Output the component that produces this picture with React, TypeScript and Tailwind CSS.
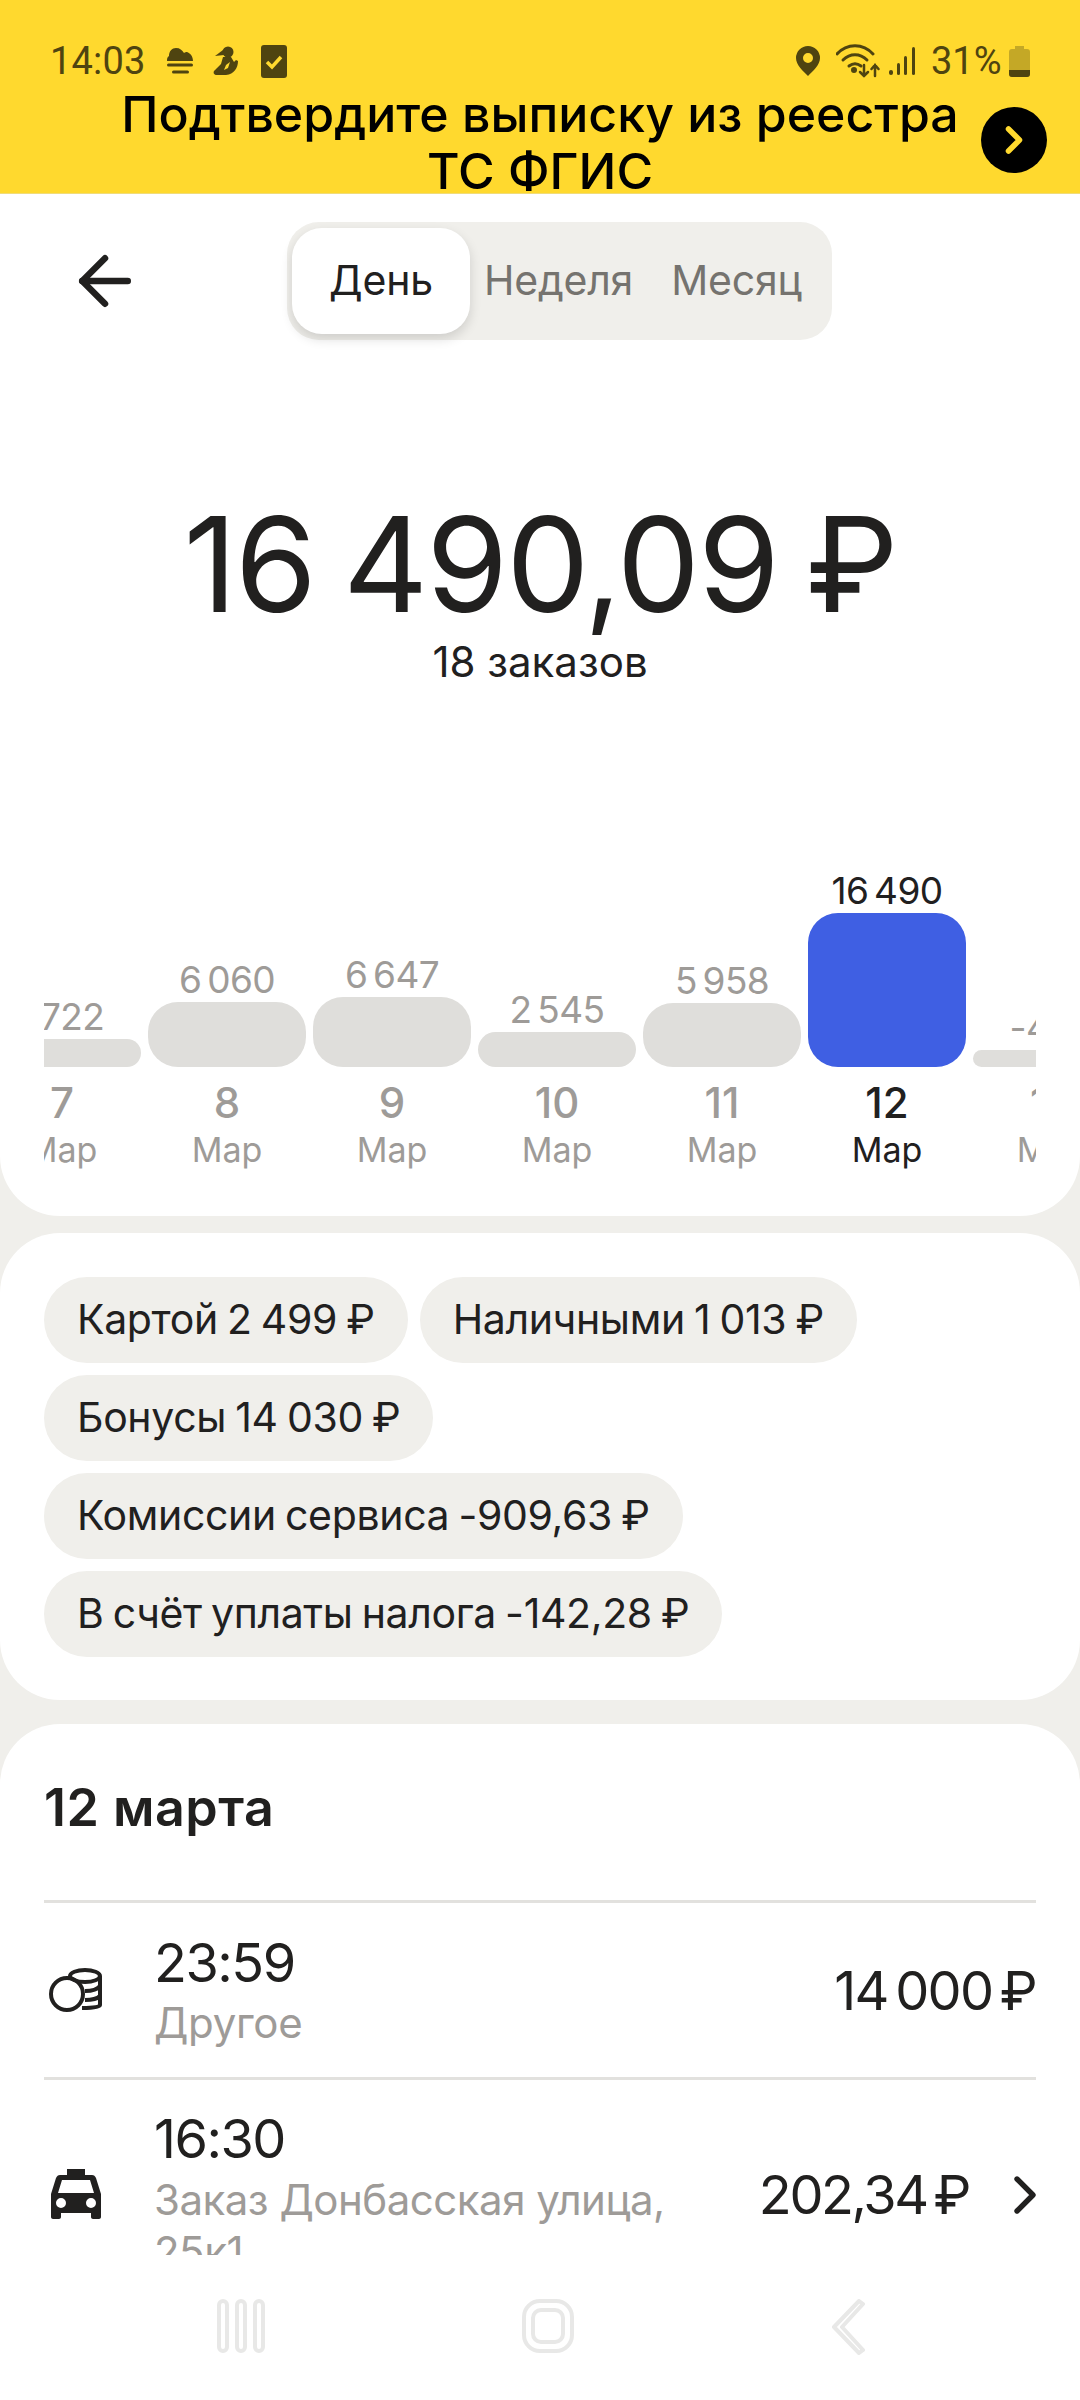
import { ArrowLeft, ChevronRight } from "lucide-react";

const days = [
  { value: "1 722", day: "7", height: 28 },
  { value: "6 060", day: "8", height: 65 },
  { value: "6 647", day: "9", height: 70 },
  { value: "2 545", day: "10", height: 35 },
  { value: "5 958", day: "11", height: 64 },
  { value: "16 490", day: "12", height: 154, active: true },
  { value: "-408", day: "13", height: 17 },
];

const chips = [
  ["Картой 2 499 ₽", "Наличными 1 013 ₽"],
  ["Бонусы 14 030 ₽"],
  ["Комиссии сервиса -909,63 ₽"],
  ["В счёт уплаты налога -142,28 ₽"],
];

function StatusBar() {
  return (
    <div className="flex h-[36px] items-center justify-between pl-[50px] pr-[50px] text-[38px] leading-none text-[#4f4410] [font-family:Roboto,sans-serif]">
      <div className="flex items-center">
        <span className="w-[115px] tracking-[0.2px]">14:03</span>
        <svg viewBox="0 0 30 28" className="h-[28px] w-[30px]" fill="#4f4410">
          <path d="M2 14c0-2 0-4 2-5 0-5 3-8 7-8 4 0 6 2 8 5 1-1 2-1 3-1 3 1 6 4 6 9z" />
          <rect x="2" y="16.500" width="26" height="3" rx="1.500" />
          <rect x="7" y="23.500" width="17" height="3" rx="1.500" />
        </svg>
        <svg viewBox="0 0 26 30" className="ml-[18px] h-[30px] w-[26px]" fill="#4f4410">
          <circle cx="15" cy="6" r="5.500" />
          <path d="M10 4 2 10l9-1z" />
          <path d="M10 11h8l3 5 2-2 2 1c0 7-4 13-12 14H4c-3 0-4-2-3-4l7-7z" />
          <path d="M13 19l4-3-2 6-4 2z" fill="#ffd92e" />
        </svg>
        <svg viewBox="0 0 26 33" className="ml-[22px] h-[33px] w-[26px]">
          <rect width="26" height="33" rx="3" fill="#4f4410" />
          <path d="M6 17l5 5 9-10" fill="none" stroke="#ffd92e" strokeWidth="3.500" />
        </svg>
      </div>
      <div className="flex items-center">
        <svg viewBox="0 0 24 30" className="h-[30px] w-[24px]" fill="#4f4410">
          <path fillRule="evenodd" d="M12 0a12 12 0 0 1 12 12c0 7-7 13-12 18C7 25 0 19 0 12A12 12 0 0 1 12 0zm0 7a5 5 0 1 0 0 10 5 5 0 0 0 0-10z" />
        </svg>
        <svg viewBox="0 0 44 34" className="ml-[16px] h-[34px] w-[44px]" fill="none" stroke="#4f4410" strokeWidth="3" strokeLinecap="round">
          <path d="M1 10c10-11 26-11 36 0" />
          <path d="M7 16c7-7 17-7 24 0" />
          <path d="M13 22c4-3 8-3 12 0" />
          <circle cx="18" cy="26" r="1.500" fill="#4f4410" />
          <path d="M28 21v11M24 28l4 4 4-4" strokeWidth="2.500" />
          <path d="M39 32V21M35.500 25l3.500-4 3.500 4" strokeWidth="2.500" />
        </svg>
        <svg viewBox="0 0 28 28" className="ml-[8px] h-[28px] w-[28px]" fill="#4f4410">
          <rect x="1" y="23" width="4" height="5" rx="2" />
          <rect x="9" y="16" width="3" height="12" rx="1.500" />
          <rect x="16" y="9" width="3" height="19" rx="1.500" />
          <rect x="24" y="0" width="3" height="28" rx="1.500" />
        </svg>
        <span className="ml-[15px] w-[78px]">31%</span>
        <svg viewBox="0 0 21 31" className="h-[31px] w-[21px]">
          <path d="M6 0h9v3h3a3 3 0 0 1 3 3v22a3 3 0 0 1-3 3H3a3 3 0 0 1-3-3V6a3 3 0 0 1 3-3h3z" fill="#c4a826" />
          <path d="M0 24h21v4a3 3 0 0 1-3 3H3a3 3 0 0 1-3-3z" fill="#4f4410" />
        </svg>
      </div>
    </div>
  );
}

function Banner() {
  return (
    <div className="relative h-[194px] shrink-0 overflow-hidden border-b border-[#f0dc7a] bg-[#ffd92e] pt-[43px]">
      <StatusBar />
      <p className="mt-[7px] text-center text-[50px] leading-[57px] font-medium text-black">
        Подтвердите выписку из реестра
        <br />
        ТС ФГИС
      </p>
      <div className="absolute top-[107px] right-[33px] flex size-[66px] items-center justify-center rounded-full bg-black">
        <ChevronRight className="size-[44px] text-[#ffd92e]" strokeWidth={3} />
      </div>
    </div>
  );
}

function Tabs() {
  return (
    <div className="flex h-[158px] items-center pt-[16px] pl-[66px]">
      <ArrowLeft className="size-[78px] text-[#21201f]" strokeWidth={2} />
      <div className="ml-[143px] flex h-[118px] w-[545px] items-center rounded-[32px] bg-[#f0efeb] pl-[5px] text-[41px] tracking-[-0.2px] text-[#75736f]">
        <div className="flex h-[106px] w-[178px] items-center justify-center rounded-[30px] bg-white text-[#21201f] shadow-[0_5px_12px_rgba(0,0,0,0.14)]">
          День
        </div>
        <span className="ml-[14px]">Неделя</span>
        <span className="ml-[38px]">Месяц</span>
      </div>
    </div>
  );
}

function Chart() {
  return (
    <div className="mx-[44px] overflow-hidden">
      <div className="-ml-[61px] flex w-[1200px] items-end gap-[7px]">
        {days.map((d) => (
          <div key={d.day} className={`flex w-[158px] shrink-0 flex-col items-center ${d.active ? "text-[#21201f]" : "text-[#9e9b98]"}`}>
            <span className="text-[37px] leading-[40px] tracking-[-0.6px] [word-spacing:-4px]">{d.value}</span>
            <div
              className={`mt-[2px] w-full rounded-[30px] ${d.active ? "bg-[#3f5fe3]" : "bg-[#dfdedb]"}`}
              style={{ height: d.height }}
            />
            <span className="mt-[12px] text-[42px] leading-[48px] font-medium">{d.day}</span>
            <span className="mt-[3px] text-[34px] leading-[40px]">Мар</span>
          </div>
        ))}
      </div>
    </div>
  );
}

export default function App() {
  return (
    <div className="relative flex h-[2400px] w-[1080px] flex-col overflow-hidden bg-[#f0efeb] text-[#21201f] [font-family:Inter,'Noto_Sans',sans-serif]">
      <Banner />
      <div className="min-h-0 flex-1 overflow-hidden">
        <section className="flex h-[1022px] flex-col rounded-b-[60px] bg-white pb-[46px]">
          <Tabs />
          <div className="mt-[147px] text-center">
            <div className="text-[132px] leading-[130px] tracking-[-2px] [word-spacing:-7px]">16 490,09 ₽</div>
            <div className="mt-[9px] text-[42px] leading-[48px]">18 заказов</div>
          </div>
          <div className="mt-auto">
            <Chart />
          </div>
        </section>

        <section className="mt-[17px] flex h-[467px] flex-col gap-[12px] rounded-[60px] bg-white px-[44px] pt-[44px]">
          {chips.map((row) => (
            <div key={row[0]} className="flex gap-[12px]">
              {row.map((chip) => (
                <span key={chip} className="flex h-[86px] items-center rounded-[43px] bg-[#f0efeb] px-[33px] text-[41px] tracking-[-0.35px] [word-spacing:-2px]">
                  {chip}
                </span>
              ))}
            </div>
          ))}
        </section>

        <section className="mt-[24px] rounded-t-[60px] bg-white px-[44px] pt-[54px]">
          <h2 className="border-b-[3px] border-[#e2e1de] pb-[62px] text-[52px] leading-[60px] font-semibold tracking-[0.5px]">12 марта</h2>
          <div className="flex h-[177px] items-center border-b-[3px] border-[#e2e1de]">
            <svg viewBox="0 0 53 44" className="ml-[5px] h-[44px] w-[53px]" fill="none" stroke="#21201f" strokeWidth="4">
              <circle cx="18" cy="26" r="16" />
              <ellipse cx="36" cy="8" rx="15" ry="6" />
              <path d="M21 8v2M51 8v29c0 2-6 3-18 3M51 18c-3 4-9 5-15 5M51 28c-3 3-9 4-15 4" />
            </svg>
            <div className="ml-[52px] flex-1">
              <div className="text-[54px] leading-[62px] tracking-[-1.5px]">23:59</div>
              <div className="mt-[4px] text-[42px] leading-[50px] tracking-[-0.3px] text-[#9e9b98]">Другое</div>
            </div>
            <div className="text-[54px] tracking-[-1.7px] [word-spacing:-6px]">14 000 ₽</div>
          </div>
          <div className="flex h-[180px] items-start pt-[28px]">
            <svg viewBox="0 0 50 50" className="mt-[61px] ml-[7px] h-[50px] w-[50px]" fill="#21201f">
              <path fillRule="evenodd" d="M16 0h18v6h7c2 0 3 1 4 3l5 16v23c0 1-1 2-2 2h-6c-1 0-2-1-2-2v-4H10v4c0 1-1 2-2 2H2c-1 0-2-1-2-2V25L5 9c1-2 2-3 4-3h7zM11 11 7 24h36l-4-13zM10 29a5 5 0 1 0 0 10 5 5 0 0 0 0-10zm30 0a5 5 0 1 0 0 10 5 5 0 0 0 0-10z" />
            </svg>
            <div className="ml-[53px] w-[530px]">
              <div className="text-[54px] leading-[62px] tracking-[-1.5px]">16:30</div>
              <div className="mt-[4px] text-[42px] leading-[52px] tracking-[-0.5px] text-[#9e9b98]">Заказ Донбасская улица, 25к1</div>
            </div>
            <div className="mt-[46px] ml-auto flex items-center">
              <span className="text-[54px] tracking-[-2.4px] [word-spacing:-6px]">202,34 ₽</span>
              <ChevronRight className="-mr-[21px] ml-[24px] size-[64px]" strokeWidth={2} />
            </div>
          </div>
        </section>
      </div>

      <nav className="flex h-[145px] shrink-0 items-start justify-between bg-white pt-[44px] pr-[215px] pl-[217px]">
        <svg viewBox="0 0 48 54" className="h-[54px] w-[48px]" fill="none" stroke="#e8e8e7" strokeWidth="4">
          <rect x="2" y="2" width="8" height="50" rx="4" />
          <rect x="20" y="2" width="8" height="50" rx="4" />
          <rect x="38" y="2" width="8" height="50" rx="4" />
        </svg>
        <svg viewBox="0 0 52 54" className="h-[54px] w-[52px]" fill="none" stroke="#e8e8e7" strokeWidth="4">
          <rect x="2" y="2" width="48" height="50" rx="16" />
          <rect x="11" y="11" width="30" height="32" rx="8" />
        </svg>
        <svg viewBox="0 0 34 56" className="h-[56px] w-[34px]" fill="none" stroke="#e8e8e7" strokeWidth="4" strokeLinejoin="round">
          <path d="M28 2 3 28l25 26 4-3L11 28 32 5z" />
        </svg>
      </nav>
    </div>
  );
}
